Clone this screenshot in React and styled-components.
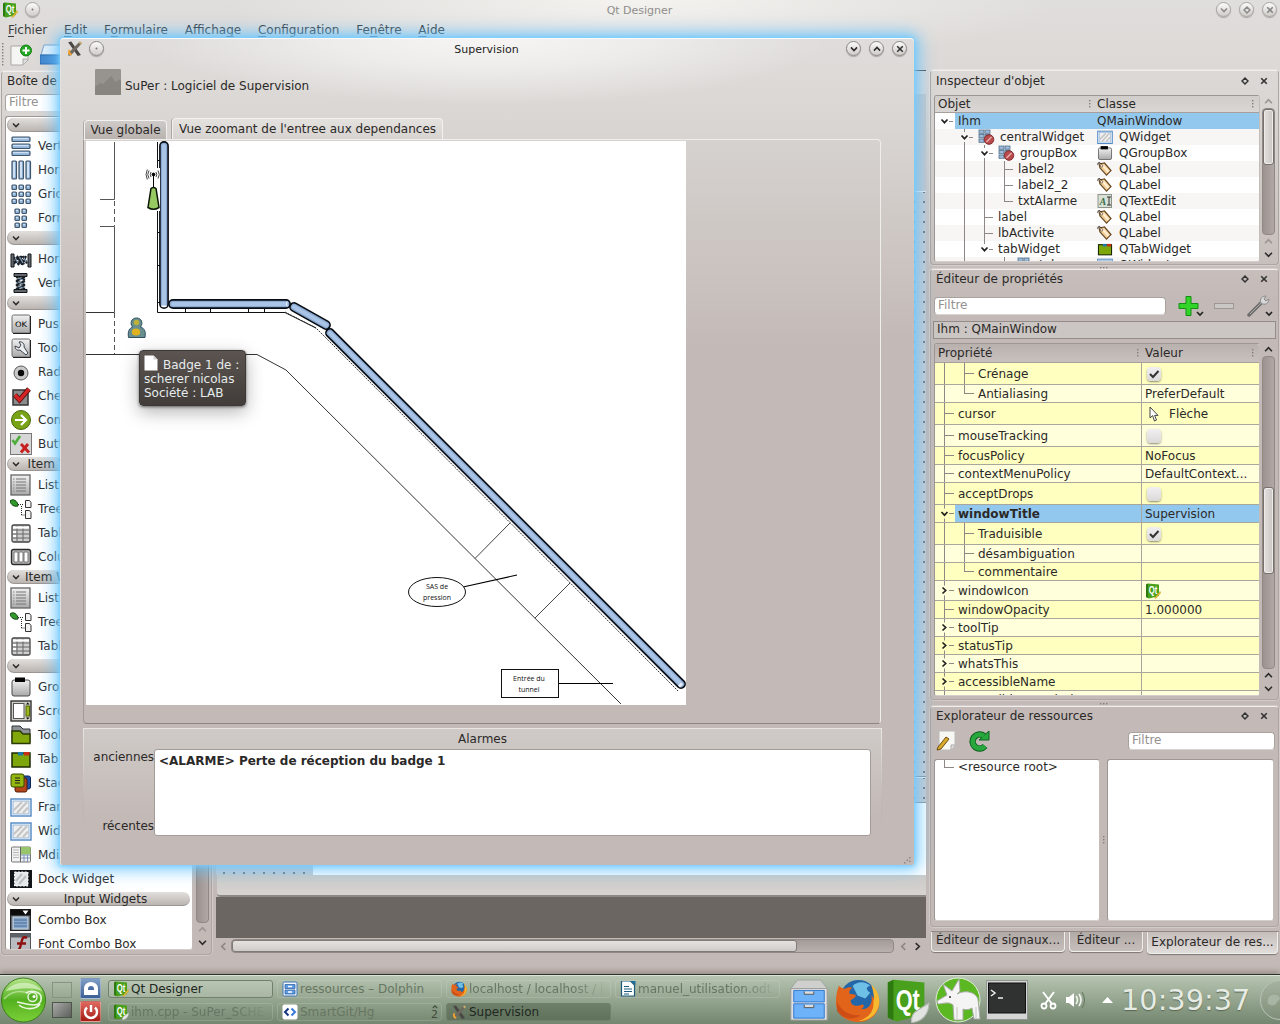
import React from "react";
import styled, { createGlobalStyle, css } from "styled-components";

const Global = createGlobalStyle`
  * { box-sizing: border-box; }
  body { margin: 0; overflow: hidden; }
  svg { display: block; flex: none; }
`;

/* ---------- desktop and main window chrome ---------- */

const Screen = styled.div`
  position: relative;
  width: 1280px;
  height: 1024px;
  overflow: hidden;
  display: flex;
  flex-direction: column;
  font: 12px "DejaVu Sans", sans-serif;
  color: #2b2928;
  white-space: nowrap;
  background: radial-gradient(ellipse 420px 64px at 640px 0, #f4f3f0 0%, rgba(238, 237, 234, 0.8) 40%, rgba(224, 222, 220, 0) 100%),
    linear-gradient(#e0dedc 0, #d9d5d2 110px, #c3bab7 300px, #c3bab7 100%);
`;

const MainTitle = styled.header`
  display: grid;
  grid-template-columns: 1fr auto 1fr;
  align-items: center;
  height: 20px;
  padding: 0 3px 0 2px;
  font-size: 11px;
  color: #8f8d8b;
`;

const TitleSide = styled.div`
  display: flex;
  align-items: center;
  padding-bottom: 1px;
  gap: ${(p) => p.$gap || 8}px;
  justify-content: ${(p) => (p.$end ? "flex-end" : "flex-start")};
`;

const RoundButton = styled.span`
  width: 15px;
  height: 15px;
  border-radius: 50%;
  border: 1px solid ${(p) => (p.$active ? "#8b8784" : "#a8a4a1")};
  background: linear-gradient(#fbfbfa, #cfccc9);
  box-shadow: 0 1px 1px rgba(0, 0, 0, 0.25);
  display: flex;
  align-items: center;
  justify-content: center;
`;

const MenuBar = styled.nav`
  height: 19px;
  display: flex;
  gap: 16.8px;
  padding-left: 8px;
  line-height: 20px;
  color: #3a3d42;
  u { text-underline-offset: 2px; }
`;

const ToolBar = styled.div`
  height: 31px;
  display: flex;
  align-items: center;
  padding-left: 1px;
  gap: 6px;
`;

const Work = styled.div`
  height: 905px;
  display: flex;
  align-items: flex-start;
`;

/* ---------- shared parts ---------- */

const Dock = styled.section`
  border: 1px solid #aca5a1;
  border-top-color: #f1efed;
  border-radius: 4px;
  box-shadow: 0 0 0 1px rgba(255, 255, 255, 0.25);
  display: flex;
  flex-direction: column;
  height: ${(p) => p.$h}px;
  padding: 0 3px;
`;

const DockTitle = styled.h2`
  margin: 0 0 ${(p) => p.$below}px;
  font: inherit;
  height: ${(p) => p.$h}px;
  padding: 0 7px 0 2px;
  display: flex;
  align-items: center;
  gap: 11px;
  flex: none;
  span { flex: 1; }
`;

const Field = styled.div`
  width: ${(p) => p.$w}px;
  height: 18px;
  flex: none;
  line-height: 15px;
  padding-left: 3px;
  color: #94918f;
  background: #fff;
  border: 1px solid #a9a29e;
  border-bottom-color: #d8d4d1;
  border-radius: 4px;
`;

const Well = styled.div`
  background: #fff;
  border: 1px solid #9d9692;
  border-bottom-color: #d4cfcc;
  border-right-color: #c3bdb9;
  border-radius: 3px;
  overflow: hidden;
  width: ${(p) => p.$w}px;
  height: ${(p) => p.$h}px;
  flex: none;
`;

const ScrollColumn = styled.div`
  width: 14px;
  height: ${(p) => p.$h}px;
  padding-bottom: 1px;
  display: flex;
  flex-direction: column;
  align-items: center;
  svg { margin: 2px 0; }
`;

const Trough = styled.div`
  width: 13px;
  flex: 1;
  border-radius: 4px;
  border: 1px solid #8f8885;
  background: linear-gradient(90deg, #9c9390, #b1a8a5);
  padding-top: ${(p) => p.$offset || 0}px;
`;

const Handle = styled.div`
  height: ${(p) => p.$h}px;
  border-radius: 3px;
  border: 1px solid #77716e;
  background: linear-gradient(90deg, #e3e0dd, #cbc6c3);
  box-shadow: inset 0 0 0 1px #eeecea;
`;

const Chevron = ({ dir = "down", size = 9, color = "#2e2c2b", w = 1.8 }) => {
  const turn = { down: 0, up: 180, left: 90, right: -90 }[dir];
  return (
    <svg width={size} height={size} viewBox="0 0 10 10">
      <path transform={`rotate(${turn} 5 5)`} d="M1.2 3 5 7 8.8 3" fill="none" stroke={color} strokeWidth={w} />
    </svg>
  );
};

const Cross = ({ size = 8, color = "#333" }) => (
  <svg width={size} height={size} viewBox="0 0 10 10">
    <path d="M1.5 1.5 8.5 8.5M8.5 1.5 1.5 8.5" stroke={color} strokeWidth="2" fill="none" />
  </svg>
);

const Diamond = ({ size = 8, color = "#333" }) => (
  <svg width={size} height={size} viewBox="0 0 10 10">
    <path d="M5 1.3 8.7 5 5 8.7 1.3 5Z" stroke={color} strokeWidth="1.8" fill="none" />
  </svg>
);

const Dot = () => (
  <svg width="3" height="3"><circle cx="1.5" cy="1.5" r="1" fill="#777" /></svg>
);

const Grip = ({ vertical, n = 3 }) => (
  <svg width={vertical ? 3 : n * 3} height={vertical ? n * 3 : 3}>
    {Array.from({ length: n }, (_, i) => (
      <rect key={i} x={vertical ? 1 : i * 3} y={vertical ? i * 3 : 1} width="1.4" height="1.4" fill="#847d7a" />
    ))}
  </svg>
);

/* ---------- icons ---------- */

const QtIcon = ({ size = 16, leaf }) => (
  <svg width={size} height={size} viewBox="0 0 16 16">
    <path d="M1 1.6 3 .6 14 1.6V13L4 15.5 1 14Z" fill="#48a01c" />
    <path d="M1 1.6 3 .6V15L1 14Z" fill="#2c7a10" />
    <text x="3.8" y="11.2" fontSize="10.500" fontWeight="bold" fill="#fff" textLength="8.600" lengthAdjust="spacingAndGlyphs" fontFamily="Liberation Sans, sans-serif">Qt</text>
    {leaf ? (
      <path d="M9.500 15.800C9 12 12 11.500 15.600 9 15.600 13 13 15.500 9.500 15.800Z" fill="#e2e4e2" stroke="#b9bcb9" strokeWidth=".4" />
    ) : (
      <path d="M9.500 15 15 8.500 16 9.600 11 15.400Z" fill="#e8c63a" stroke="#b08c1a" strokeWidth=".4" />
    )}
  </svg>
);

const XIcon = ({ size = 16 }) => (
  <svg width={size} height={size} viewBox="0 0 16 16">
    <path d="M2 2 5 1.5 14 14 11 15Z" fill="#4a4744" />
    <path d="M13 1.5 15 3 5 14 2.5 15 2 12.5Z" fill="#6e6861" />
    <path d="M2.4 9C1.5 12 2 14.5 5 14.7L5.5 12.8C3.9 12.6 3.6 11 4.2 9.5Z" fill="#f0a02e" />
    <path d="M12 2.4 13.8 1.4 15 3 13.4 4.4Z" fill="#cfae70" />
  </svg>
);

const blue = "#8fb4da";
const ink = "#42566b";

const Cube = ({ x, y, w = 4.5, h = 4.5 }) => (
  <g>
    <rect x={x} y={y} width={w} height={h} rx="1" fill={blue} stroke={ink} strokeWidth="1.2" />
    <rect x={x + 1} y={y + 1} width={w - 2.5} height={h > 6 ? h - 2.5 : 1.2} fill="#cfe1f3" />
  </g>
);

const three = [2, 9, 16];

const widgetShapes = {
  vbox: three.map((y) => <Cube key={y} x={2} y={y} w={18} />),
  hbox: three.map((x) => <Cube key={x} x={x} y={2} h={18} />),
  grid: three.flatMap((x) => three.map((y) => <Cube key={x + "-" + y} x={x} y={y} />)),
  form: [5, 12].flatMap((x) => three.map((y) => <Cube key={x + "-" + y} x={x} y={y} />)),
  hspring: (
    <g>
      <path d="M4 9 9 17M7 8 12 16.5M10 8 14 16.5M13 8 17 15.5M4 16 8 8M8 17 12 8M12 17 16 8" stroke="#1b2229" strokeWidth="2.2" />
      <path d="M5 9.5 8 15M10 9.5 13 15M14 9.5 16 14" stroke="#87a4c0" strokeWidth="1.2" />
      <path d="M1 6h3v13H1zM18 6h3v13h-3z" fill="#61676d" stroke="#15181a" />
    </g>
  ),
  vspring: (
    <g>
      <path d="M6 5 15 8M6 9 15 5M6 9 15 13M6 13 15 9M6 13 15 17M6 17 15 13" stroke="#1b2229" strokeWidth="2.2" />
      <path d="M8 6 13 8M8 10 13 12M8 14 13 16" stroke="#87a4c0" strokeWidth="1.2" />
      <path d="M4 1.500h13v3H4zM4 17.500h13v3H4z" fill="#61676d" stroke="#15181a" />
    </g>
  ),
  push: (
    <g>
      <rect x="2" y="2" width="18" height="18" rx="1.5" fill="url(#metal)" stroke="#6c6c6c" />
      <path d="M3 20.500h17.500V3" stroke="#222" fill="none" />
      <text x="5" y="14" fontSize="7.500" textLength="12" lengthAdjust="spacingAndGlyphs" fontFamily="DejaVu Sans, sans-serif" fill="#000">OK</text>
    </g>
  ),
  tool: (
    <g>
      <rect x="2" y="2" width="18" height="18" rx="1.500" fill="url(#metal)" stroke="#6c6c6c" />
      <path d="M3 20.500h17.500V3" stroke="#222" fill="none" />
      <path d="M9 5c3-1 6 2 5 5l4 6-2 2-6-5c-3 1-5-1-5-4l4 2 2-3z" fill="#eceff1" stroke="#3b4148" />
    </g>
  ),
  radio: (
    <g>
      <circle cx="11" cy="12" r="7" fill="#c9c9c9" stroke="#5a5a5a" />
      <circle cx="11" cy="12" r="3.200" fill="#0a0a0a" />
    </g>
  ),
  check: (
    <g>
      <rect x="3" y="5" width="15" height="15" fill="#8b8b8b" stroke="#333" strokeWidth="1.500" />
      <path d="M5 10 9.500 15 19 4" stroke="#591212" strokeWidth="5" fill="none" />
      <path d="M5 10 9.500 15 19 4" stroke="#d62424" strokeWidth="3.400" fill="none" />
    </g>
  ),
  command: (
    <g>
      <circle cx="11" cy="11" r="9.500" fill="#79a316" stroke="#49660b" />
      <path d="M5 11h10M11 6l5 5-5 5" stroke="#fff" strokeWidth="2.200" fill="none" />
    </g>
  ),
  buttonbox: (
    <g>
      <rect x="0.500" y="0.500" width="21" height="21" fill="#d6d6d6" stroke="#777" />
      <path d="M2.500 7 5 10.500 10 3" stroke="#4fae3a" strokeWidth="2.600" fill="none" />
      <path d="M11 11 19 19.500M18 11 11 19.500" stroke="#c51f1f" strokeWidth="2.800" />
    </g>
  ),
  list: (
    <g>
      <rect x="1" y="1" width="19" height="20" fill="url(#metal)" stroke="#666" strokeWidth="1.300" />
      <path d="M6 5h10M6 8h10M6 11h10M6 14h10M6 17h10" stroke="#777" />
      <path d="M3 5h1.500M3 8h1.500M3 11h1.500M3 14h1.500M3 17h1.500" stroke="#888" />
    </g>
  ),
  tree: (
    <g>
      <path d="M0 3C3 0 8 3 8 8 4 9 1 7 0 3Z" fill="#2f9a2a" stroke="#123f12" />
      <path d="M8 6.500h6M11.500 8v9M11.500 17h3" stroke="#222" strokeDasharray="1 1" />
      <path d="M15.500 2.500h4l1.500 2v5h-5.500zM15.500 12.500h4l1.500 2v6h-5.500z" fill="#f2f2f2" stroke="#333" />
    </g>
  ),
  table: (
    <g>
      <rect x="2" y="3" width="18" height="17" rx="1.500" fill="#cfcfcf" stroke="#444" strokeWidth="1.300" />
      <path d="M2 8h18M2 12h18M2 16h18M7 3v17M13 3v17" stroke="#666" />
      <path d="M3 5.500h16M3 10h3M3 14h3" stroke="#fff" strokeWidth="2" />
    </g>
  ),
  column: (
    <g>
      <rect x="1.500" y="3.500" width="19" height="15" rx="2" fill="#b5b5b5" stroke="#2c2c2c" strokeWidth="1.400" />
      <path d="M4 6h4v10H4zM9 6h4v10H9zM14 6h4v10h-4z" fill="#fff" stroke="#777" />
    </g>
  ),
  group: (
    <g>
      <rect x="2" y="4" width="18" height="16" rx="2" fill="url(#metal)" stroke="#4c4c4c" />
      <rect x="5" y="1.500" width="10" height="4.500" fill="#050505" />
    </g>
  ),
  scroll: (
    <g>
      <rect x="1" y="1" width="20" height="20" fill="#cfcfc6" stroke="#333" strokeWidth="1.400" />
      <rect x="3.500" y="3.500" width="10.500" height="15" fill="#fff" stroke="#555" />
      <rect x="16" y="6" width="3.500" height="10" fill="#9cb81f" stroke="#56660c" />
      <path d="M16 4.500 17.700 2.500 19.500 4.500zM16 17.500 17.700 19.500 19.500 17.500z" />
    </g>
  ),
  toolbox: (
    <g>
      <path d="M2 2h8l3 3h7v14H2z" fill="#8d9297" stroke="#30343a" />
      <path d="M2 7h8l3 3h7v9.500H2z" fill="#83a80c" stroke="#2b3a02" strokeWidth="1.400" />
    </g>
  ),
  tab: (
    <g>
      <rect x="2" y="5" width="18" height="14" fill="#7ca609" stroke="#1d2a02" strokeWidth="1.500" />
      <rect x="8" y="4" width="5" height="3.500" fill="#1e78a8" />
      <rect x="14" y="4" width="5.500" height="3.500" fill="#c93018" />
    </g>
  ),
  stacked: (
    <g>
      <rect x="9" y="4" width="11.500" height="13" rx="2" fill="#1d4fa8" stroke="#0d2557" />
      <rect x="5" y="6" width="12" height="14" rx="2" fill="#b3461a" stroke="#551b06" />
      <rect x="1" y="2" width="13" height="13" rx="2" fill="#93b60f" stroke="#394a02" />
      <path d="M5 6h5M5 8.500h5M5 11h5" stroke="#222" />
    </g>
  ),
  frame: (
    <g>
      <rect x="1" y="3" width="20" height="17" fill="#fff" stroke="#4e86c4" strokeWidth="1.400" />
      <rect x="3" y="5" width="16" height="13" fill="#efefef" stroke="#7aa5d3" strokeWidth=".8" />
      <path d="M4 14 12 6M7 17 17 6M13 17 18 11.500" stroke="#c4c4c4" strokeWidth="2" />
    </g>
  ),
  mdi: (
    <g>
      <rect x="1.500" y="3" width="19" height="15" rx="1" fill="#f1f1f1" stroke="#777" />
      <rect x="11" y="3" width="9.500" height="7.500" fill="#98c56b" />
      <path d="M3 6h6M3 8.500h6M3 11h6M3 13.500h6" stroke="#b9b9b9" />
      <path d="M11 11h9M11 14h9M14 11v7M17.500 11v7" stroke="#7d93ba" />
      <path d="M10.500 3v15" stroke="#666" />
    </g>
  ),
  dock: (
    <g>
      <rect x="0" y="2" width="22" height="18" fill="#12161b" />
      <rect x="4.500" y="4" width="13.500" height="14" fill="#e5e9ec" stroke="#fff" strokeDasharray="2 1.400" />
      <path d="M6 13 12 6M9 16 16 8" stroke="#bcc0c4" strokeWidth="2" />
    </g>
  ),
  combo: (
    <g>
      <rect x="0.500" y="0.500" width="20" height="21" fill="#5d6873" stroke="#222" />
      <rect x="0.500" y="0.500" width="20" height="6" fill="#0c0c0d" />
      <path d="M12.500 1.500h6L15.500 5.500z" fill="#fff" />
      <rect x="3" y="8" width="15" height="12" fill="#87a8cc" stroke="#cfd7df" />
      <path d="M4 11h13M4 14h13M4 17h13" stroke="#4c6d94" />
    </g>
  ),
  font: (
    <g>
      <rect x="0.500" y="0.500" width="20" height="21" fill="#b9bdc1" stroke="#555" />
      <rect x="0.500" y="0.500" width="20" height="4" fill="#5c6167" />
      <path d="M17 5C12 2 12 8 10.500 13 9.500 17 7 19 4 17.500M7 10.500h9" stroke="#8f1010" strokeWidth="2.400" fill="none" />
    </g>
  ),
};

const WidgetGlyph = ({ kind, size = 22 }) => (
  <svg width={size} height={size} viewBox="0 0 22 22">
    <defs>
      <linearGradient id="metal" x2="0" y2="1">
        <stop stopColor="#f1f1f1" />
        <stop offset="1" stopColor="#a9a9a9" />
      </linearGradient>
    </defs>
    {widgetShapes[kind]}
  </svg>
);

const TagIcon = () => (
  <svg width="16" height="16" viewBox="0 0 16 16">
    <path d="M2 3 7.500 2 14 9.500 9.500 14.200 3 7Z" fill="#f3cf96" stroke="#6b4c28" strokeWidth="1.200" />
    <path d="M6 4.500 11.500 11" stroke="#fff1d6" strokeWidth="2" />
    <circle cx="4.600" cy="4.800" r="1.200" fill="#fff" stroke="#5b4427" strokeWidth=".7" />
    <path d="M.500 3.500C1 1 3 .800 4 3" stroke="#222" fill="none" />
  </svg>
);

const TextEditIcon = () => (
  <svg width="16" height="16" viewBox="0 0 16 16">
    <rect x="1" y="1.500" width="13.500" height="13" fill="#d9e0d6" stroke="#8d948b" />
    <text x="2.500" y="12" fontSize="10" fontStyle="italic" fontWeight="bold" fontFamily="Liberation Serif, serif" fill="#3a7048">A</text>
    <path d="M10 4h4M10 12h4M12 4v8" stroke="#333" />
  </svg>
);

const BrokenLayout = () => (
  <svg width="17" height="16" viewBox="0 0 17 16">
    {[1, 7].flatMap((x) => [1, 5.500, 10].map((y) => <rect key={x + "-" + y} x={x} y={y} width="5" height="3.300" fill="#9dbbd8" stroke="#51708d" strokeWidth=".8" />))}
    <circle cx="11" cy="10.500" r="4.800" fill="#b94a4c" stroke="#852f32" />
    <path d="M8.500 13 13.500 8" stroke="#e9b6b6" strokeWidth="1.200" />
  </svg>
);

/* ---------- widget box ---------- */

const LeftDock = styled.div`
  width: 216px;
  padding: 1px 4px 0 1px;
`;

const WidgetBody = styled.div`
  display: flex;
  gap: 3px;
  margin-top: 4px;
`;

const Category = styled.div`
  height: 17px;
  padding: 1px 2px 1px 1px;
`;

const CategoryBar = styled.div`
  height: 14px;
  display: grid;
  grid-template-columns: 15px 1fr;
  align-items: center;
  justify-items: center;
  padding-right: 2px;
  border-radius: 7px;
  line-height: 14px;
  background: linear-gradient(#e2dfdc, #bbb5b1);
  border-bottom: 1px solid #9c9693;
  border-left: 1px solid #aaa4a0;
`;

const WidgetRow = styled.div`
  height: 24px;
  display: flex;
  align-items: center;
  gap: 6px;
  padding-left: 4px;
`;

const widgetBox = [
  ["", [["vbox", "Vertical"], ["hbox", "Horizontal"], ["grid", "Grid"], ["form", "Form"]]],
  ["", [["hspring", "Horizontal"], ["vspring", "Vertical"]]],
  ["", [["push", "Push"], ["tool", "Tool"], ["radio", "Radio"], ["check", "Check"], ["command", "Comm"], ["buttonbox", "Button"]]],
  ["Item Views (Model-Based)", [["list", "List"], ["tree", "Tree"], ["table", "Table"], ["column", "Column"]]],
  ["Item Widgets (Item-Based)", [["list", "List"], ["tree", "Tree"], ["table", "Table"]]],
  ["", [["group", "Group"], ["scroll", "Scroll"], ["toolbox", "Tool"], ["tab", "Tab"], ["stacked", "Stack"], ["frame", "Frame"], ["frame", "Widget"], ["mdi", "MdiArea"], ["dock", "Dock Widget"]]],
  ["Input Widgets", [["combo", "Combo Box"], ["font", "Font Combo Box"]]],
];

const WidgetBox = () => (
  <LeftDock>
    <Dock $h={884}>
      <DockTitle $h={17} $below={5}><span>Boîte de widgets</span></DockTitle>
      <Field $w={201}>Filtre</Field>
      <WidgetBody>
        <Well $w={188} $h={834}>
          {widgetBox.map(([name, items], i) => (
            <React.Fragment key={i}>
              <Category><CategoryBar><Chevron size={8} /><span>{name}</span></CategoryBar></Category>
              {items.map(([kind, label]) => (
                <WidgetRow key={label}><WidgetGlyph kind={kind} />{label}</WidgetRow>
              ))}
            </React.Fragment>
          ))}
        </Well>
        <ScrollColumn $h={834}>
          <Trough />
          <Chevron dir="up" color="#9b9491" />
          <Chevron />
        </ScrollColumn>
      </WidgetBody>
    </Dock>
  </LeftDock>
);

/* ---------- form editor area ---------- */

const Center = styled.div`
  width: 710px;
  height: 884px;
  display: flex;
  flex-direction: column;
`;

const dots = css`
  background: radial-gradient(circle, #6b7078 0.7px, transparent 0.9px) 3px 5px / 10px 10px #cdcbcc;
`;

const FormTop = styled.div`
  height: 24px;
  border-top: 1px solid #4d4c4b;
  background: #dcd9d7;
`;
const FormUpper = styled.div`height: 98px; background: #c9c7c9; border-bottom: 1px solid #f2f2f2;`;
const FormMid = styled.div`height: 585px; ${dots} border-bottom: 1px solid #8b9299;`;
const FormLow = styled.div`height: 26px; ${dots} border-bottom: 1px solid #8b9299; border-top: 1px solid #f0f2f4;`;
const FormEnd = styled.div`height: 72px; display: flex;`;
const FormGrid = styled.div`width: 97px; ${dots}`;
const FormText = styled.div`flex: 1; background: #fff;`;
const FormStatus = styled.div`
  height: 22px;
  background: linear-gradient(#cecbc7, #d6d3d0);
  border-bottom: 2px solid #8d8885;
  border-bottom-left-radius: 4px;
  margin-left: 1px;
`;
const MdiBack = styled.div`height: 41px; background: #6b6661;`;
const HScroll = styled.div`
  height: 16px;
  display: flex;
  align-items: center;
  gap: 5px;
  padding: 0 4px 0 3px;
`;
const HTrough = styled.div`
  flex: 1;
  height: 14px;
  margin-left: -2px;
  border: 1px solid #918a87;
  border-radius: 4px;
  background: linear-gradient(#a39b98, #b9b1ae);
`;
const HHandle = styled.div`
  width: 565px;
  height: 12px;
  border-radius: 3px;
  border: 1px solid #817b78;
  background: linear-gradient(#e5e2e0, #cfcbc8);
`;

const FormEditor = () => (
  <Center>
    <FormTop /><FormUpper /><FormMid /><FormLow />
    <FormEnd><FormGrid /><FormText /></FormEnd>
    <FormStatus />
    <MdiBack />
    <HScroll>
      <Chevron dir="left" color="#8d8683" />
      <HTrough><HHandle /></HTrough>
      <Chevron dir="left" color="#8d8683" />
      <Chevron dir="right" />
    </HScroll>
  </Center>
);

/* ---------- right docks ---------- */

const RightColumn = styled.aside`
  width: 354px;
  padding: 0 1px 0 4px;
  display: flex;
  flex-direction: column;
`;

const GripRow = styled.div`
  height: ${(p) => p.$h}px;
  display: flex;
  justify-content: center;
  align-items: center;
`;

const Split = styled.div`
  display: flex;
  gap: 2px;
`;

const HeadRow = styled.div`
  height: ${(p) => p.$h}px;
  display: flex;
  align-items: center;
  padding-right: 2px;
  background: ${(p) => p.$bg};
  border-bottom: 1px solid #a69f9b;
`;

const HeadCell = styled.div`
  width: ${(p) => p.$w}px;
  flex: ${(p) => (p.$w ? "none" : 1)};
  display: flex;
  align-items: center;
  justify-content: space-between;
  padding-left: 3px;
  padding-right: 3px;
`;

const TreeRow = styled.div`
  height: 16px;
  display: flex;
  background: ${(p) => (p.$selected ? "linear-gradient(90deg, #fff 20px, #93c8ee 20px)" : p.$alt ? "#f7f6f5" : "#fff")};
`;

const TreeName = styled.div`
  width: 162px;
  display: flex;
  align-items: center;
  gap: 5px;
  line-height: 16px;
`;

const TreeClass = styled.div`
  display: flex;
  align-items: center;
  gap: 6px;
`;

const line = { stroke: "#8d8885", strokeWidth: 1 };

const Branches = ({ w, h, bars = [], end, stub, arrow }) => (
  <svg width={w} height={h}>
    {bars.map((x) => <path key={x} d={`M${x + 0.5} 0V${h}`} {...line} />)}
    {end !== undefined && <path d={`M${end + 0.5} 0V${Math.floor(h / 2) + 0.5}`} {...line} />}
    {stub !== undefined && <path d={`M${arrow ? stub + 5 : stub} ${Math.floor(h / 2) + 0.5}H${stub + 10}`} {...line} />}
    {arrow && <rect x={stub - 4} y={h / 2 - 5} width="9" height="10" fill="currentColor" />}
    {arrow === "down" && <path d={`M${stub - 2.5} ${h / 2 - 1.5}l3 3.200 3-3.200`} fill="none" stroke="#222" strokeWidth="1.700" />}
    {arrow === "right" && <path d={`M${stub - 1.5} ${h / 2 - 3}l3.200 3-3.200 3`} fill="none" stroke="#222" strokeWidth="1.700" />}
  </svg>
);

const Cell = styled.span`
  display: flex;
  color: ${(p) => p.$bg};
`;

const objects = [
  { name: "Ihm", cls: "QMainWindow", w: 18, stub: 9, arrow: "down", selected: true },
  { name: "centralWidget", cls: "QWidget", w: 38, end: 29, stub: 29, arrow: "down", bars: [29], layout: true, icon: "frame" },
  { name: "groupBox", cls: "QGroupBox", w: 58, bars: [29, 49], stub: 49, arrow: "down", layout: true, icon: "group" },
  { name: "label2", cls: "QLabel", w: 78, bars: [29, 49, 69], stub: 69, icon: "tag" },
  { name: "label2_2", cls: "QLabel", w: 78, bars: [29, 49, 69], stub: 69, icon: "tag" },
  { name: "txtAlarme", cls: "QTextEdit", w: 78, bars: [29, 49], end: 69, stub: 69, icon: "text" },
  { name: "label", cls: "QLabel", w: 58, bars: [29, 49], stub: 49, icon: "tag" },
  { name: "lbActivite", cls: "QLabel", w: 58, bars: [29, 49], stub: 49, icon: "tag" },
  { name: "tabWidget", cls: "QTabWidget", w: 58, bars: [29], end: 49, stub: 49, arrow: "down", icon: "tab" },
  { name: "tab", cls: "QWidget", w: 77, bars: [29, 69], stub: 69, layout: true, icon: "frame" },
];

const classIcon = (k) => (k === "tag" ? <TagIcon /> : k === "text" ? <TextEditIcon /> : <WidgetGlyph kind={k} size={16} />);

const Inspector = () => (
  <Dock $h={195}>
    <DockTitle $h={20} $below={4}><span>Inspecteur d'objet</span><Diamond /><Cross /></DockTitle>
    <Split>
      <Well $w={326} $h={167}>
        <HeadRow $h={17} $bg="linear-gradient(#d1cdca, #d9d6d3)">
          <HeadCell $w={159}>Objet<Grip vertical /></HeadCell>
          <HeadCell>Classe<Grip vertical /></HeadCell>
        </HeadRow>
        {objects.map((o, i) => (
          <TreeRow key={i} $selected={o.selected} $alt={i % 2}>
            <TreeName>
              <Cell $bg={i % 2 ? "#f7f6f5" : "#fff"}>
                <Branches w={o.w} h={16} bars={o.bars} end={o.end} stub={o.stub} arrow={o.arrow} />
              </Cell>
              {o.layout && <BrokenLayout />}
              {o.name}
            </TreeName>
            <TreeClass>{o.icon && classIcon(o.icon)}{o.cls}</TreeClass>
          </TreeRow>
        ))}
      </Well>
      <ScrollColumn $h={167}>
        <Chevron dir="up" color="#9b9491" />
        <Trough><Handle $h={56} /></Trough>
        <Chevron dir="up" color="#9b9491" />
        <Chevron />
      </ScrollColumn>
    </Split>
  </Dock>
);

const FilterRow = styled.div`
  display: flex;
  align-items: center;
  height: 26px;
  flex: none;
  gap: ${(p) => p.$gap || 0}px;
  padding-left: ${(p) => p.$left || 0}px;
`;

const Spacer = styled.span`flex: 1;`;

const Tools = styled.div`
  flex: 1;
  display: flex;
  align-items: center;
  justify-content: space-between;
  padding: 0 2px 0 11px;
`;

const ObjectLabel = styled.div`
  height: 18px;
  flex: none;
  margin: 2px -1px 4px -1px;
  padding-left: 3px;
  line-height: 15px;
  border: 1px solid #938c89;
  background: #cbc6c3;
`;

const PropRow = styled.div`
  height: ${(p) => p.$h}px;
  display: flex;
  border-bottom: 1px solid #a9a69c;
  font-weight: ${(p) => (p.$selected ? "bold" : "normal")};
  background: ${(p) => (p.$selected ? "linear-gradient(90deg, #ffffbf 20px, #93c8ee 20px)" : p.$dark ? "#ffffbf" : "#ffffdc")};
`;

const PropName = styled.div`
  width: 207px;
  display: flex;
  align-items: center;
  border-right: 1px solid #a9a69c;
`;

const PropValue = styled.div`
  display: flex;
  align-items: center;
  padding-left: 3px;
  font-weight: normal;
`;

const CheckBox = styled.span`
  width: 14px;
  height: 14px;
  margin-left: 2px;
  border-radius: 4px;
  background: linear-gradient(#f1efef, #dcdad9);
  box-shadow: 0 1px 2px rgba(0, 0, 0, 0.45);
  display: flex;
  align-items: center;
  justify-content: center;
`;

const Check = ({ on }) => (
  <CheckBox>
    {on && <svg width="12" height="12" viewBox="0 0 12 12"><path d="M2 6 5 9 10.500 3" fill="none" stroke="#333" strokeWidth="2" /></svg>}
  </CheckBox>
);

const CursorValue = styled.span`
  display: flex;
  align-items: center;
  gap: 9px;
  padding-left: 3px;
`;

const props = [
  [22, "Crénage", 2, <Check on />],
  [18, "Antialiasing", 3, "PreferDefault"],
  [22, "cursor", 1, <CursorValue><svg width="12" height="16" viewBox="0 0 12 16"><path d="M2 1v11l2.600-2.400L6.500 15l2-1-1.900-4.600H10z" fill="#fff" stroke="#444" /></svg>Flèche</CursorValue>],
  [22, "mouseTracking", 1, <Check />],
  [18, "focusPolicy", 1, "NoFocus"],
  [18, "contextMenuPolicy", 1, "DefaultContext..."],
  [22, "acceptDrops", 1, <Check />],
  [18, "windowTitle", 1, "Supervision", "down"],
  [22, "Traduisible", 2, <Check on />],
  [18, "désambiguation", 2, ""],
  [18, "commentaire", 3, ""],
  [20, "windowIcon", 1, <QtIcon />, "right"],
  [18, "windowOpacity", 1, "1.000000"],
  [18, "toolTip", 1, "", "right"],
  [18, "statusTip", 1, "", "right"],
  [18, "whatsThis", 1, "", "right"],
  [18, "accessibleName", 1, "", "right"],
  [18, "accessibleDescription", 1, ""],
];

const PropertyEditor = () => (
  <Dock $h={431}>
    <DockTitle $h={17} $below={6}><span>Éditeur de propriétés</span><Diamond /><Cross /></DockTitle>
    <FilterRow>
      <Field $w={232}>Filtre</Field>
      <Tools>
        <svg width="27" height="24" viewBox="0 0 27 24">
          <path d="M9 2.500h5v7h7v5h-7v7H9v-7H2v-5h7z" fill="#33d42a" stroke="#138f12" />
          <path d="M20 18l3 3 3-3" stroke="#222" strokeWidth="1.600" fill="none" />
        </svg>
        <svg width="24" height="8"><rect x=".5" y="1.500" width="19" height="5" fill="#cbc7c4" stroke="#9d9794" /></svg>
        <svg width="26" height="24" viewBox="0 0 26 24">
          <path d="M2 21 15 8" stroke="#6d6d6d" strokeWidth="3.500" strokeLinecap="round" />
          <path d="M3 20 15 8" stroke="#aaa" strokeWidth="1" />
          <path d="M14 9C12 5 15 2 19 2L17 5 19 7 22 5C22 9 18 12 14 9Z" fill="#d8d8d8" stroke="#8a8a8a" />
          <path d="M19 18l3 3 3-3" stroke="#222" strokeWidth="1.600" fill="none" />
        </svg>
      </Tools>
    </FilterRow>
    <ObjectLabel>Ihm : QMainWindow</ObjectLabel>
    <Split>
      <Well $w={326} $h={353}>
        <HeadRow $h={19} $bg="linear-gradient(#b9b1ae, #c9c1be)">
          <HeadCell $w={207}>Propriété<Grip vertical /></HeadCell>
          <HeadCell>Valeur<Grip vertical /></HeadCell>
        </HeadRow>
        {props.map(([h, name, depth, value, arrow], i) => {
          const bg = i % 2 ? "#ffffdc" : "#ffffbf";
          return (
            <PropRow key={name} $h={h} $dark={i % 2 === 0} $selected={name === "windowTitle"}>
              <PropName>
                <Cell $bg={name === "windowTitle" ? "#ffffbf" : bg}>
                  <Branches w={depth === 1 ? 23 : 43} h={h - 1} bars={depth === 2 ? [9, 29] : [9]} end={depth === 3 ? 29 : undefined} stub={depth === 1 ? 9 : 29} arrow={arrow} />
                </Cell>
                {name}
              </PropName>
              <PropValue>{value}</PropValue>
            </PropRow>
          );
        })}
      </Well>
      <ScrollColumn $h={353}>
        <Chevron dir="up" />
        <Trough $offset={130}><Handle $h={87} /></Trough>
        <Chevron dir="up" />
        <Chevron />
      </ScrollColumn>
    </Split>
  </Dock>
);

const ResourceLists = styled.div`
  display: flex;
  align-items: center;
  justify-content: space-between;
  margin: 5px 1px 0 0;
`;

const RootRow = styled.div`
  display: flex;
  align-items: center;
  height: 14px;
`;

const Resources = () => (
  <Dock $h={221}>
    <DockTitle $h={17} $below={4}><span>Explorateur de ressources</span><Diamond /><Cross /></DockTitle>
    <FilterRow $gap={11} $left={2}>
      <svg width="21" height="22" viewBox="0 0 21 22">
        <path d="M3 1h16v14l-4 5H3z" fill="#f7f7f4" stroke="#bbb" />
        <path d="M2 17 10 7l3 2L5 19l-4 1z" fill="#d9a92c" stroke="#6d4e12" />
        <path d="M19 15h-4v5" fill="#ddd" stroke="#aaa" />
      </svg>
      <svg width="22" height="22" viewBox="0 0 22 22">
        <path d="M17 16A7 7 0 1 1 16 6" fill="none" stroke="#0d5e1e" strokeWidth="6.500" />
        <path d="M21 1v9h-10z" fill="#27a83c" stroke="#0d5e1e" />
        <path d="M17 16A7 7 0 1 1 16 6" fill="none" stroke="#27a83c" strokeWidth="4.600" />
      </svg>
      <Spacer />
      <Field $w={147}>Filtre</Field>
    </FilterRow>
    <ResourceLists>
      <Well $w={166} $h={162}>
        <RootRow><Branches w={23} h={14} end={9} stub={9} />&lt;resource root&gt;</RootRow>
      </Well>
      <Grip vertical />
      <Well $w={167} $h={162} />
    </ResourceLists>
  </Dock>
);

const BottomTabs = styled.div`
  display: flex;
  gap: 4px;
  align-items: flex-start;
  margin: 4px 0 0 1px;
  border-top: 1px solid #8f8885;
`;

const BottomTab = styled.div`
  width: ${(p) => p.$w}px;
  height: ${(p) => (p.$current ? 22 : 20)}px;
  line-height: ${(p) => (p.$current ? 20 : 17)}px;
  text-align: center;
  border: 1px solid #f0eeec;
  border-top: none;
  border-radius: 0 0 4px 4px;
  box-shadow: 0 1px 1px #7e7774;
  background: ${(p) => (p.$current ? "linear-gradient(#c5bdba, #e0dddb)" : "linear-gradient(#b2aaa7, #c5bebb)")};
`;

/* ---------- supervision window ---------- */

const AppWindow = styled.main`
  position: absolute;
  left: 60px;
  top: 38px;
  width: 854px;
  height: 827px;
  border-radius: 4px 4px 2px 2px;
  border-top: 1px solid #fbfbfb;
  border-left: 1px solid #e4e1df;
  background: radial-gradient(ellipse 340px 66px at 427px 0, #f6f5f3 0%, rgba(243, 242, 240, 0.75) 45%, rgba(224, 222, 220, 0) 100%),
    linear-gradient(#dfdddb 0, #d9d5d2 90px, #c3bab7 300px);
  box-shadow: 0 0 4px 1px #78cdff, 0 0 16px 5px rgba(100, 195, 255, 0.85);
  padding: 0 3px 0 22px;
  display: flex;
  flex-direction: column;
`;

const AppTitle = styled.header`
  height: 20px;
  margin-left: -17px;
  padding-right: 4px;
  display: grid;
  grid-template-columns: 1fr auto 1fr;
  align-items: center;
  font-size: 11px;
  color: #222;
`;

const Heading = styled.div`
  height: 60px;
  display: flex;
  align-items: flex-start;
  padding: 10px 0 0 12px;
  gap: 4px;
  p { margin: 10px 0 0; line-height: 15px; }
`;

const Tabs = styled.div`
  height: 20px;
  display: flex;
  align-items: flex-end;
  gap: 4px;
`;

const Tab = styled.div`
  height: ${(p) => (p.$current ? 22 : 19)}px;
  width: ${(p) => p.$w}px;
  line-height: ${(p) => (p.$current ? 20 : 18)}px;
  margin-bottom: ${(p) => (p.$current ? -1 : 0)}px;
  margin-left: 1px;
  text-align: center;
  border: 1px solid #f3f1ef;
  border-bottom: none;
  border-radius: 4px 4px 0 0;
  box-shadow: -1px 0 0 #aca7a4;
  background: ${(p) => (p.$current ? "linear-gradient(#e4e2df, #d6d2cf)" : "linear-gradient(#cfcbc8, #b9b2af)")};
`;

const TabPage = styled.div`
  width: 798px;
  height: 585px;
  flex: none;
  border: 1px solid #f0eeec;
  border-left-color: #a29b98;
  border-bottom-color: #8d8683;
  border-radius: 0 4px 4px 4px;
  padding: 1px;
  padding-left: 2px;
  background: linear-gradient(#d6d2cf, #c3bab7 210px);
`;

const AlarmGroup = styled.section`
  width: 799px;
  height: 109px;
  flex: none;
  margin-top: 4px;
  border: 1px solid #e6e3e1;
  border-bottom: none;
  border-image: linear-gradient(#e9e6e4, #bdb5b2 70%, transparent) 1;
  background: linear-gradient(#cfcac7, #c3bab7 80%);
`;

const GroupTitle = styled.div`
  height: 20px;
  line-height: 21px;
  text-align: center;
`;

const AlarmBody = styled.div`
  display: flex;
`;

const AlarmLabels = styled.div`
  width: 70px;
  height: 84px;
  line-height: 14px;
  padding-top: 1px;
  display: flex;
  flex-direction: column;
  justify-content: space-between;
  align-items: flex-end;
  letter-spacing: -0.05px;
`;

const AlarmText = styled.div`
  width: 717px;
  height: 87px;
  padding: 4px;
  background: #fff;
  border: 1px solid #a39c99;
  border-radius: 3px;
  font-weight: bold;
  line-height: 14px;
`;

const ResizeGrip = styled.div`
  margin-top: auto;
  padding-bottom: 1px;
  align-self: flex-end;
`;

const Tip = styled.div`
  position: absolute;
  left: 139px;
  top: 350px;
  width: 107px;
  height: 56px;
  padding: 4px 4px;
  border-radius: 4px;
  border: 1px solid #3d3936;
  background: linear-gradient(#5b5450, #423d3a);
  box-shadow: 0 6px 18px rgba(0, 0, 0, 0.3), 0 1px 3px rgba(0, 0, 0, 0.5);
  color: #e6ecec;
  line-height: 14px;
`;

const TipFirst = styled.div`
  display: flex;
  align-items: flex-start;
  gap: 5px;
  height: 17px;
  span { padding-top: 3px; line-height: 14px; }
`;

const Pipe = ({ x1, y1, x2, y2 }) => (
  <g strokeLinecap="round">
    <line x1={x1} y1={y1} x2={x2} y2={y2} stroke="#060a12" strokeWidth="9.800" />
    <line x1={x1} y1={y1} x2={x2} y2={y2} stroke="#8ba9cf" strokeWidth="6.600" />
    <line x1={x1} y1={y1} x2={x2} y2={y2} stroke="#a9c4e6" strokeWidth="4" />
  </g>
);

const PlanText = styled.text`
  font: 7px "Open Sans", "Noto Sans", sans-serif;
  text-anchor: middle;
  fill: #111;
`;

const Plan = () => (
  <svg width="600" height="564" viewBox="86 141 600 564">
    <rect x="86" y="141" width="600" height="564" fill="#fff" />
    <g fill="none" stroke="#111" strokeWidth="1">
      <path d="M114.500 142V199.500H100M100 226.500H114.500V312.500" stroke="#555" />
      <path d="M114.500 201V226M114.500 313V354" stroke="#555" strokeDasharray="5 3" />
      <path d="M86 312.500H114.500M86 354.500H257L286 370 621 704" stroke="#333" />
      <path d="M157.500 142V312.500H285L316 328" />
      <path d="M157.500 160.500h4M157.500 232.500h4M157.500 265.500h4M157.500 302.500h4" />
      <path d="M185.500 309v4M210.500 309v4M248.500 309v4M264.500 309v4" />
      <path d="M285 312 316 328 678 691" strokeDasharray="2 1" stroke="#333" />
      <path d="M510 523 475 558.500M570 583 535 618" stroke="#444" />
      <path d="M463 587 517 575M558 683.500H613" stroke="#000" strokeWidth="1.200" />
      <ellipse cx="437" cy="592" rx="28.500" ry="14.500" fill="#fff" />
      <rect x="501.500" y="669.500" width="57" height="28" fill="#fff" />
    </g>
    <PlanText x="437" y="589">SAS de</PlanText>
    <PlanText x="437" y="600">pression</PlanText>
    <PlanText x="529" y="681">Entrée du</PlanText>
    <PlanText x="529" y="692">tunnel</PlanText>
    <Pipe x1={330} y1={333} x2={681} y2={684} />
    <Pipe x1={294} y1={307} x2={326} y2={325} />
    <Pipe x1={173} y1={304} x2={286} y2={304} />
    <Pipe x1={164} y1={146} x2={164} y2={304} />
    <path d="M161 305.500a3 1.800 0 0 0 6 0z" fill="#fff" />
    <path d="M287.500 301.500q-2.500 2.500 0 5" fill="none" stroke="#fff" strokeWidth=".8" />
    <path d="M678 685.500l3-3 2 2-3 3z" fill="#e8eef7" />
    <rect x="146" y="168" width="14" height="43" fill="#fff" />
    <g fill="none" stroke="#444" strokeWidth="1">
      <path d="M151 172q-1.500 2.500 0 5M149 170.500q-2.500 4 0 8M147.300 169.500q-2.500 5 0 10M156 172q1.500 2.500 0 5M158 170.500q2.500 4 0 8" />
      <path d="M153.500 175V188" stroke="#000" />
      <circle cx="153.500" cy="174.500" r="1.400" fill="#000" stroke="#000" />
      <path d="M151 188.500q2.500-2 5 0l3 19q-5.500 3.500-11 0z" fill="#97cb62" stroke="#0c1606" strokeWidth="1.500" />
    </g>
    <path d="M128.500 337.500c-1-7 1-9 4-10.500-3-4-1-9 4-9s7 5 4 9c4 1.500 5.500 4 4.500 10.500z" fill="#688f8d" stroke="#2f4f63" strokeWidth="1" />
    <circle cx="136.500" cy="322.500" r="2.700" fill="#bdb138" />
    <ellipse cx="136" cy="332" rx="4.200" ry="3.500" fill="#e0b220" />
  </svg>
);

const SupervisionWindow = () => (
  <AppWindow>
    <AppTitle>
      <TitleSide $gap={6}>
        <XIcon size={17} />
        <RoundButton $active><Dot /></RoundButton>
      </TitleSide>
      <span>Supervision</span>
      <TitleSide $end>
        <RoundButton $active><Chevron size={8} w={2} /></RoundButton>
        <RoundButton $active><Chevron size={8} w={2} dir="up" /></RoundButton>
        <RoundButton $active><Cross size={8} /></RoundButton>
      </TitleSide>
    </AppTitle>
    <Heading>
      <svg width="26" height="26" viewBox="0 0 26 26">
        <rect width="26" height="26" rx="1" fill="#979490" />
        <path d="M0 18 5 14l3 1 8-8 5 6 4-3 1 2v13q0 1-1 1H1q-1 0-1-1z" fill="#888581" />
      </svg>
      <p>SuPer : Logiciel de Supervision</p>
    </Heading>
    <Tabs>
      <Tab $w={83}>Vue globale</Tab>
      <Tab $w={271} $current>Vue zoomant de l'entree aux dependances</Tab>
    </Tabs>
    <TabPage><Plan /></TabPage>
    <AlarmGroup>
      <GroupTitle>Alarmes</GroupTitle>
      <AlarmBody>
        <AlarmLabels><span>anciennes</span><span>récentes</span></AlarmLabels>
        <AlarmText>&lt;ALARME&gt; Perte de réception du badge 1</AlarmText>
      </AlarmBody>
    </AlarmGroup>
    <ResizeGrip>
      <svg width="7" height="7" viewBox="0 0 7 7">
        <path d="M5 0h1.500v1.500H5zM2.500 2.500H4V4H2.500zM5 3.500h1.500V5H5zM0 5h1.500v1.500H0z" fill="#8d8683" />
      </svg>
    </ResizeGrip>
  </AppWindow>
);

/* ---------- panel ---------- */

const Panel = styled.footer`
  height: 49px;
  display: flex;
  align-items: center;
  padding-left: 1px;
  overflow: hidden;
  background: linear-gradient(#b6c4b1, #9bab95 40%, #74866f);
  border-top: 1px solid #dbe3d8;
  box-shadow: 0 -1px 0 #293128, 0 -4px 5px rgba(80, 65, 60, 0.35);
`;

const PanelStack = styled.div`
  display: flex;
  flex-direction: column;
  gap: ${(p) => p.$gap}px;
  margin-left: ${(p) => p.$left}px;
`;

const PagerCell = styled.div`
  width: 20px;
  height: 16px;
  border: 1px solid ${(p) => (p.$on ? "#4d554b" : "#85937f")};
  background: ${(p) => (p.$on ? "linear-gradient(135deg, #a9aaa8, #5c5f5b)" : "transparent")};
`;

const SessionButton = styled.div`
  width: 21px;
  height: 21px;
  border-radius: 2px;
  border: 1px solid rgba(255, 255, 255, 0.35);
  background: ${(p) => p.$bg};
  display: flex;
  align-items: center;
  justify-content: center;
`;

const TaskGrid = styled.div`
  margin-left: 7px;
  width: 680px;
  flex: none;
  display: grid;
  grid-template-columns: repeat(4, 165px);
  grid-auto-rows: 18px;
  gap: 5px 4px;
`;

const Task = styled.div`
  display: flex;
  align-items: center;
  gap: 2px;
  padding: 0 3px 0 4px;
  border-radius: 3px;
  border: 1px solid ${(p) => (p.$state === "faint" ? "rgba(215,225,210,.22)" : "#71806c")};
  background: ${(p) => (p.$state === "active" ? "rgba(50,65,45,.35)" : p.$state === "open" ? "rgba(215,225,210,.25)" : "transparent")};
  color: ${(p) => (p.$state === "faint" ? "#677663" : "#20271f")};
  overflow: hidden;
`;

const TaskName = styled.span`
  flex: 1;
  overflow: hidden;
  line-height: 16px;
  mask-image: ${(p) => (p.$fade ? "linear-gradient(90deg, #000 75%, transparent)" : "none")};
`;

const GroupCount = styled.span`
  display: flex;
  flex-direction: column;
  align-items: center;
  font-size: 11px;
  line-height: 10px;
  color: #3d4a3a;
`;

const Launchers = styled.div`
  display: flex;
  align-items: center;
  gap: 5px;
`;

const Tray = styled.div`
  display: flex;
  align-items: center;
  gap: 8px;
  margin-left: 12px;
`;

const Clock = styled.time`
  width: 130px;
  flex: none;
  margin-left: 1px;
  font-size: 28.800px;
  line-height: 48px;
  color: #e6ebe3;
  text-shadow: 0 1px 1px #59664f;
`;

const Cashew = styled.div`
  width: 40px;
  height: 40px;
  flex: none;
  margin-left: 9px;
  border-radius: 50%;
  border: 1px solid #b9c4b5;
  background: linear-gradient(#a5b29f, #7f8e79);
  display: flex;
  align-items: center;
  padding-left: 5px;
`;

const Firefox = ({ size }) => (
  <svg width={size} height={size} viewBox="0 0 46 46">
    <circle cx="24" cy="21" r="19" fill="#2467a9" />
    <path d="M18 8c5-5 13-5 18 0-5 1-4 5 0 7l-5 6-8-3z" fill="#6fc0e6" />
    <path d="M4 8c2 2 4 3 6 3 3-2 6-2 8-1-3 2-4 4-3 6l6 1c1 3-3 4-5 6 0 5 6 7 12 4 2 0 2 3-1 5 9 0 12-8 10-15l3 4c0-6-1-9-3-13 7 6 9 13 8 20-2 11-11 17-21 17C11 45 1 37 1 25 1 18 2 13 4 8Z" fill="#e2641b" />
    <path d="M37 7c7 6 9 13 8 20-2 11-11 17-21 17 10-3 17-10 15-22l1 2c0-6-1-12-3-17Z" fill="#f6b92f" />
    <path d="M2 24c4 9 12 15 24 14-6 5-17 5-24-4z" fill="#bf3d12" opacity=".6" />
  </svg>
);

const Cabinet = ({ size }) => (
  <svg width={size} height={size} viewBox="0 0 40 44">
    <path d="M8 1h24l7 9H1z" fill="#cfd0ce" stroke="#a3a4a2" />
    <rect x="1" y="10" width="38" height="33" fill="#dedfde" stroke="#9c9d9c" />
    <path d="M4 12h32v12H4zM4 26h32v15H4z" fill="#6eb2fa" stroke="#3679cc" />
    <path d="M15 13v3h10v-3M15 27v3h10v-3" fill="#ddd" stroke="#555" />
  </svg>
);

const DocIcon = () => (
  <svg width="16" height="17" viewBox="0 0 16 17">
    <path d="M1.500 1h9l4 4v11h-13z" fill="#fff" stroke="#1d5a7d" strokeWidth="1.200" />
    <path d="M10 0h5.500v5.500z" fill="#1d6f9a" />
    <path d="M4 6.500h5M4 9h8M4 11.500h8M4 14h5" stroke="#1d5a7d" />
  </svg>
);

const DolphinIcon = () => (
  <svg width="16" height="16" viewBox="0 0 16 16">
    <rect x="1" y="1" width="14" height="14" rx="1.500" fill="#f3f6f9" stroke="#3f76b8" />
    <path d="M3 3.500h10v4H3zM3 9h10v4H3z" fill="#5e9be0" stroke="#3468a8" strokeWidth=".8" />
    <path d="M6 5.500h4M6 11h4" stroke="#fff" strokeWidth="1.400" />
  </svg>
);

const SmartGit = () => (
  <svg width="16" height="16" viewBox="0 0 16 16">
    <rect x=".5" y=".5" width="15" height="15" rx="2" fill="#fff" />
    <path d="M6.500 4.500 3 8l3.500 3.500" stroke="#17367f" strokeWidth="2" fill="none" />
    <path d="M9.500 4.500 13 8l-3.500 3.500" stroke="#3a79d8" strokeWidth="2" fill="none" />
  </svg>
);

const TaskBar = () => (
  <Panel>
    <svg width="46" height="46" viewBox="0 0 46 46">
      <defs>
        <linearGradient id="suse" x2="0" y2="1">
          <stop stopColor="#b7e68d" /><stop offset=".5" stopColor="#54b01f" /><stop offset="1" stopColor="#7bd038" />
        </linearGradient>
      </defs>
      <circle cx="22.500" cy="23" r="22" fill="url(#suse)" stroke="#3a7f1a" />
      <path d="M5 14C12 3 34 3 41 14 29 9 15 12 5 14Z" fill="#e4f7d3" opacity=".65" />
      <path d="M3 22C10 14 20 13 27 16" fill="none" stroke="#d8f0c4" strokeWidth="1.500" opacity=".6" />
      <path d="M25 16c4-3 13-2 15 3 1 6-2 9-7 9-6 0-11-2-17-3M18 28c6 5 17 5 21-1" fill="none" stroke="#e9f6df" strokeWidth="1.600" />
      <circle cx="31.500" cy="20" r="4.500" fill="#58ad28" stroke="#e9f6df" strokeWidth="1.400" />
      <circle cx="33" cy="19.500" r="1.500" fill="#fff" />
    </svg>
    <PanelStack $left={5} $gap={4}><PagerCell /><PagerCell $on /></PanelStack>
    <PanelStack $left={8} $gap={2}>
      <SessionButton $bg="linear-gradient(#809fc6, #3b5f94)">
        <svg width="16" height="15" viewBox="0 0 16 15"><path d="M1 14V7a7 6 0 0 1 14 0v7z" fill="#fff" /><path d="M5 8a3 3 0 0 1 6 0v1H5z" fill="#4c70a5" /></svg>
      </SessionButton>
      <SessionButton $bg="linear-gradient(#e06a60, #a31c14)">
        <svg width="16" height="16" viewBox="0 0 16 16"><path d="M4 3.500a6 6 0 1 0 8 0M8 1v7" fill="none" stroke="#fff" strokeWidth="2.400" /></svg>
      </SessionButton>
    </PanelStack>
    <TaskGrid>
      <Task $state="open"><QtIcon /><TaskName>Qt Designer</TaskName></Task>
      <Task $state="faint"><DolphinIcon /><TaskName>ressources – Dolphin</TaskName></Task>
      <Task $state="faint"><Firefox size={16} /><TaskName $fade>localhost / localhost / l</TaskName></Task>
      <Task $state="faint"><DocIcon /><TaskName $fade>manuel_utilisation.odt</TaskName></Task>
      <Task $state="faint"><QtIcon leaf /><TaskName $fade>ihm.cpp - SuPer_SCHE</TaskName></Task>
      <Task $state="faint">
        <SmartGit /><TaskName>SmartGit/Hg</TaskName>
        <GroupCount><Chevron dir="up" size={6} color="#3d4a3a" />2</GroupCount>
      </Task>
      <Task $state="active"><XIcon /><TaskName>Supervision</TaskName></Task>
    </TaskGrid>
    <Launchers>
      <Cabinet size={42} />
      <Firefox size={45} />
      <QtIcon size={45} leaf />
      <svg width="46" height="46" viewBox="0 0 46 46">
        <circle cx="23" cy="23" r="22" fill="#5cb822" stroke="#e3efdb" />
        <path d="M2 24 12 18 8 7 17 14 24 2 25 14 22 17C29 13 40 14 43 22L45 42H39L37 31C34 33 30 33 28 32L28 43H19L18 28C13 24 8 27 3 27Z" fill="#f4f4f4" stroke="#a7aaa5" />
        <path d="M22 30v12M41 30v11" stroke="#c3c5c2" />
        <circle cx="15" cy="20" r="1" fill="#333" />
      </svg>
      <svg width="42" height="40" viewBox="0 0 42 40">
        <rect x=".5" y=".5" width="41" height="39" fill="#d4d6d4" stroke="#929592" />
        <rect x="2.500" y="3" width="37" height="30" fill="#303131" stroke="#111" />
        <path d="M5 10l4 3-4 3M12 18h5" fill="none" stroke="#eee" strokeWidth="1.500" />
      </svg>
    </Launchers>
    <Tray>
      <svg width="17" height="20" viewBox="0 0 17 20">
        <path d="M3 2 12 14M14 2 5 14" stroke="#fff" strokeWidth="2" />
        <circle cx="4" cy="16" r="2.500" fill="none" stroke="#fff" strokeWidth="1.800" />
        <circle cx="13" cy="16" r="2.500" fill="none" stroke="#fff" strokeWidth="1.800" />
      </svg>
      <svg width="21" height="20" viewBox="0 0 21 20">
        <path d="M1 7h3l5-4v14l-5-4H1z" fill="#fff" />
        <path d="M11 6q3 4 0 8M14 4q4 6 0 12" fill="none" stroke="#eef2ec" strokeWidth="1.700" />
        <path d="M17 2q5 8 0 16" fill="none" stroke="#6d7d68" strokeWidth="1.200" />
      </svg>
      <svg width="26" height="10" viewBox="0 0 26 10"><path d="M8 8h11L13.500 2z" fill="#fff" /></svg>
    </Tray>
    <Clock>10:39:37</Clock>
    <Cashew>
      <svg width="16" height="14" viewBox="0 0 16 14"><path d="M2 4C5 0 12 0 14 4 15 8 12 7 11 10 9 14 2 13 1 9Z" fill="#a9b5a4" stroke="#93a08d" /></svg>
    </Cashew>
  </Panel>
);

export default function App() {
  return (
    <Screen>
      <Global />
      <MainTitle>
        <TitleSide $gap={7}><QtIcon /><RoundButton><Dot /></RoundButton></TitleSide>
        <span>Qt Designer</span>
        <TitleSide $end>
          <RoundButton><Chevron size={8} color="#888" /></RoundButton>
          <RoundButton><Diamond size={8} color="#888" /></RoundButton>
          <RoundButton><Cross size={8} color="#888" /></RoundButton>
        </TitleSide>
      </MainTitle>
      <MenuBar>
        <span><u>F</u>ichier</span>
        <span><u>E</u>dit</span>
        <span>F<u>o</u>rmulaire</span>
        <span>Afficha<u>g</u>e</span>
        <span><u>C</u>onfiguration</span>
        <span>Fe<u>n</u>être</span>
        <span><u>A</u>ide</span>
      </MenuBar>
      <ToolBar>
        <Grip vertical n={8} />
        <svg width="24" height="24" viewBox="0 0 24 24">
          <path d="M1 3h17v14l-5 5H1z" fill="#f5f5f3" stroke="#a9a7a4" />
          <path d="M18 16h-5v6" fill="#ddd" stroke="#aaa" />
          <circle cx="16" cy="7.500" r="5.500" fill="#25a825" stroke="#128012" />
          <path d="M12.500 7.500h7M16 4v7" stroke="#fff" strokeWidth="2" />
        </svg>
        <svg width="26" height="24" viewBox="0 0 26 24">
          <path d="M1 12 4 2h18l3 10z" fill="#e8f1fa" stroke="#78a2cc" />
          <path d="M0 12h26v9H0z" fill="#4389cf" stroke="#2a68aa" />
        </svg>
      </ToolBar>
      <Work>
        <WidgetBox />
        <FormEditor />
        <RightColumn>
          <Inspector />
          <GripRow $h={4}><Grip /></GripRow>
          <PropertyEditor />
          <GripRow $h={6}><Grip /></GripRow>
          <Resources />
          <BottomTabs>
            <BottomTab $w={134}>Éditeur de signaux...</BottomTab>
            <BottomTab $w={74}>Éditeur ...</BottomTab>
            <BottomTab $w={131} $current>Explorateur de res...</BottomTab>
          </BottomTabs>
        </RightColumn>
      </Work>
      <TaskBar />
      <SupervisionWindow />
      <Tip>
        <TipFirst>
          <svg width="14" height="16" viewBox="0 0 14 16"><path d="M.5.500h9l4 4v11H.5z" fill="#fff" /><path d="M9.500.500v4h4z" fill="#cfcfcf" /></svg>
          <span>Badge 1 de :</span>
        </TipFirst>
        <div>scherer nicolas</div>
        <div>Société : LAB</div>
      </Tip>
    </Screen>
  );
}
